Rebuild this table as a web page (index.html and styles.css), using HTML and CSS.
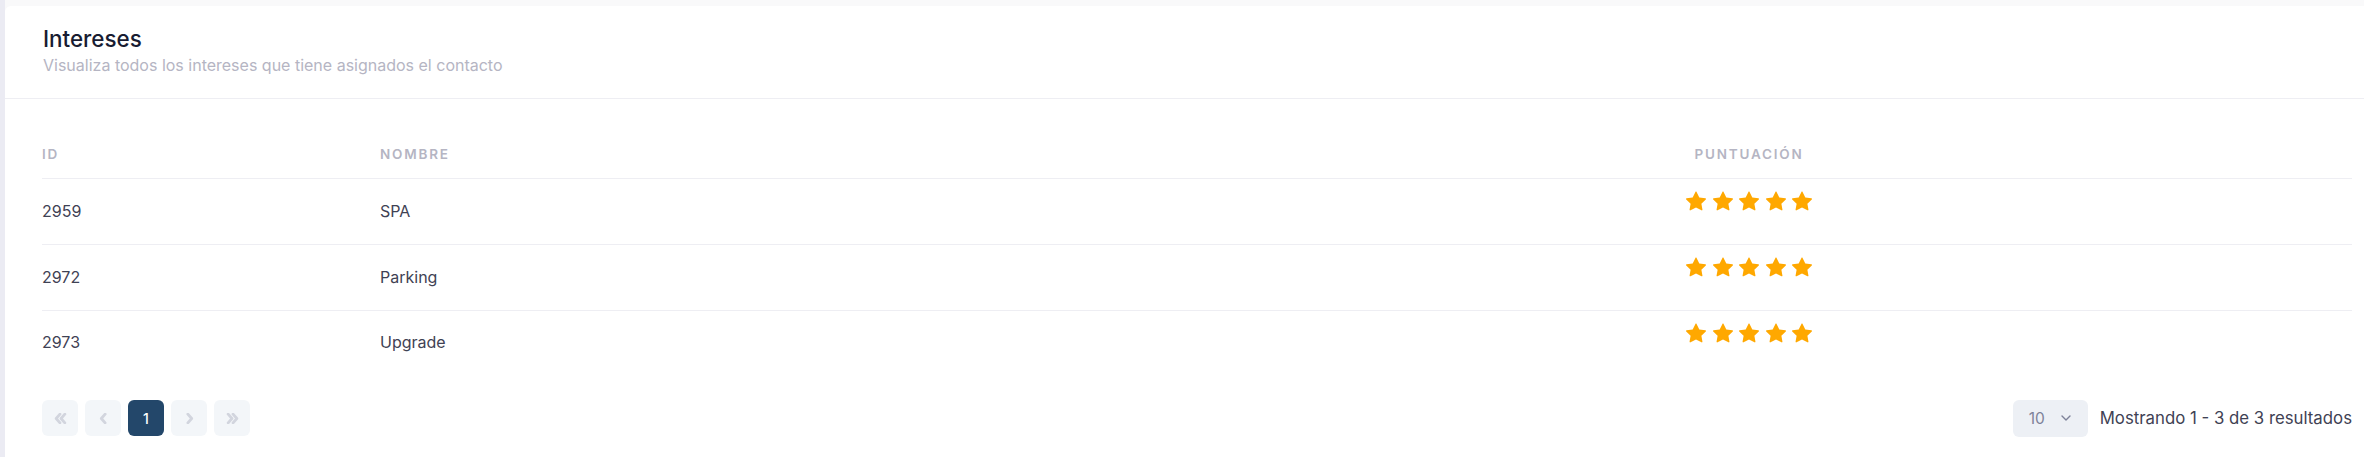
FILE: index.html
```html
<!DOCTYPE html>
<html lang="es">
<head>
<meta charset="utf-8">
<title>Intereses</title>
<link rel="stylesheet" href="styles.css">
</head>
<body>
<svg class="defs" aria-hidden="true">
  <symbol id="star" viewBox="0 0 16 16"><path d="M3.612 15.443c-.386.198-.824-.149-.746-.592l.83-4.730L.173 6.765c-.329-.314-.158-.888.283-.95l4.898-.696L7.538.792c.197-.39.73-.39.927 0l2.184 4.327 4.898.696c.441.062.612.636.282.95l-3.522 3.356.83 4.730c.078.443-.36.79-.746.592L8 13.187l-4.389 2.256z"/></symbol>
</svg>
<div class="page">
  <div class="side-strip"></div>
  <main class="main">
    <section class="card">
      <header class="card-header">
        <h3 class="card-title">Intereses</h3>
        <p class="card-subtitle">Visualiza todos los intereses que tiene asignados el contacto</p>
      </header>
      <div class="card-body">
        <table class="table">
          <colgroup>
            <col class="col-id">
            <col class="col-name">
            <col class="col-score">
          </colgroup>
          <thead>
            <tr>
              <th>ID</th>
              <th>Nombre</th>
              <th class="center">Puntuación</th>
            </tr>
          </thead>
          <tbody>
            <tr>
              <td>2959</td>
              <td>SPA</td>
              <td class="stars-cell"><div class="stars">
                <svg class="star"><use href="#star"/></svg>
                <svg class="star"><use href="#star"/></svg>
                <svg class="star"><use href="#star"/></svg>
                <svg class="star"><use href="#star"/></svg>
                <svg class="star"><use href="#star"/></svg>
              </div></td>
            </tr>
            <tr>
              <td>2972</td>
              <td>Parking</td>
              <td class="stars-cell"><div class="stars">
                <svg class="star"><use href="#star"/></svg>
                <svg class="star"><use href="#star"/></svg>
                <svg class="star"><use href="#star"/></svg>
                <svg class="star"><use href="#star"/></svg>
                <svg class="star"><use href="#star"/></svg>
              </div></td>
            </tr>
            <tr class="last">
              <td>2973</td>
              <td>Upgrade</td>
              <td class="stars-cell"><div class="stars">
                <svg class="star"><use href="#star"/></svg>
                <svg class="star"><use href="#star"/></svg>
                <svg class="star"><use href="#star"/></svg>
                <svg class="star"><use href="#star"/></svg>
                <svg class="star"><use href="#star"/></svg>
              </div></td>
            </tr>
          </tbody>
        </table>

        <div class="table-footer">
          <nav class="pagination">
            <span class="page-btn">
              <svg viewBox="0 0 12 10" class="pg-icon"><path d="M5.5 1 2 5l3.5 4M10 1 6.5 5 10 9"/></svg>
            </span>
            <span class="page-btn">
              <svg viewBox="0 0 12 10" class="pg-icon"><path d="M7.5 1 4 5l3.5 4"/></svg>
            </span>
            <span class="page-btn active">1</span>
            <span class="page-btn">
              <svg viewBox="0 0 12 10" class="pg-icon"><path d="M4.5 1 8 5l-3.5 4"/></svg>
            </span>
            <span class="page-btn">
              <svg viewBox="0 0 12 10" class="pg-icon"><path d="M2 1l3.5 4L2 9M6.5 1 10 5 6.5 9"/></svg>
            </span>
          </nav>
          <div class="page-info">
            <div class="page-size">
              <span class="page-size-value">10</span>
              <svg viewBox="0 0 10 6" class="select-chevron"><path d="M1 1l4 4 4-4"/></svg>
            </div>
            <span class="page-count">Mostrando 1 - 3 de 3 resultados</span>
          </div>
        </div>
      </div>
    </section>
  </main>
</div>
</body>
</html>
```

FILE: styles.css
```css
* {
  box-sizing: border-box;
}

html, body {
  margin: 0;
  padding: 0;
}

body {
  font-family: "Inter", "Noto Sans", sans-serif;
  color: #3f4254;
  background: #f9f9fb;
  height: 457px;
  overflow: hidden;
}

.defs {
  position: absolute;
  width: 0;
  height: 0;
  overflow: hidden;
}

.page {
  display: flex;
  min-height: 457px;
}

.side-strip {
  width: 5px;
  flex: 0 0 5px;
  background: #ebebf3;
}

.main {
  flex: 1;
  padding-top: 6px;
  background: #f9f9fa;
}

.card {
  background: #ffffff;
  border-top-left-radius: 6px;
  min-height: 451px;
}

.card-header {
  padding: 21px 12px 24px 38px;
  border-bottom: 1px solid #eeeef3;
}

.card-title {
  margin: 0;
  font-size: 22.4px;
  line-height: 24px;
  font-weight: 500;
  color: #181c32;
}

.card-subtitle {
  margin: 5px 0 0;
  font-size: 16px;
  line-height: 18px;
  color: #b5b5c3;
  font-weight: 400;
}

.card-body {
  padding: 45px 12px 0 37px;
}

.table {
  width: 100%;
  border-collapse: collapse;
  table-layout: fixed;
}

.col-id {
  width: 338px;
}

.col-name {
  width: 766px;
}

.table th {
  text-align: left;
  font-size: 13.5px;
  font-weight: 600;
  letter-spacing: 1.8px;
  text-transform: uppercase;
  color: #b5b5c3;
  line-height: 20px;
  padding: 0 0 14px;
  border-bottom: 1px solid #eeeef3;
}

.table th.center {
  text-align: center;
}

.table td {
  font-size: 16px;
  line-height: 20px;
  color: #3f4254;
  height: 66px;
  padding: 0 0 2px;
  vertical-align: middle;
  border-bottom: 1px solid #eeeef3;
}

.table tr.last td {
  border-bottom: none;
  height: 65px;
}

.table td.stars-cell {
  vertical-align: top;
  padding-top: 12px;
}

.stars {
  display: flex;
  justify-content: center;
  gap: 6.5px;
}

.star {
  width: 20px;
  height: 20px;
  fill: #ffa800;
}

.table-footer {
  display: flex;
  justify-content: space-between;
  align-items: center;
  margin-top: 24px;
}

.pagination {
  display: flex;
  gap: 7px;
}

.page-btn {
  width: 36px;
  height: 36px;
  border-radius: 6px;
  background: #f3f6f9;
  display: flex;
  align-items: center;
  justify-content: center;
  font-size: 14px;
  font-weight: 500;
  color: #ffffff;
}

.page-btn.active {
  background: #23476a;
}

.pg-icon {
  width: 13px;
  height: 11px;
  fill: none;
  stroke: #d2d5de;
  stroke-width: 2.6;
  stroke-linecap: round;
  stroke-linejoin: round;
}

.page-info {
  display: flex;
  align-items: center;
  gap: 12px;
}

.page-size {
  width: 75px;
  height: 37px;
  border-radius: 6px;
  background: #edf0f5;
  display: flex;
  align-items: center;
  padding-left: 16px;
  gap: 16px;
}

.page-size-value {
  font-size: 15.5px;
  color: #7e8299;
}

.select-chevron {
  width: 10px;
  height: 6px;
  fill: none;
  stroke: #7e8299;
  stroke-width: 1.4;
  stroke-linecap: round;
  stroke-linejoin: round;
}

.page-count {
  font-size: 16.8px;
  color: #3f4254;
}
```
